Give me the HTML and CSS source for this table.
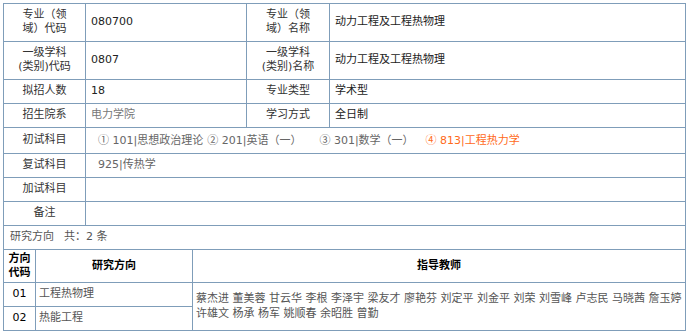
FILE: index.html
```html
<!DOCTYPE html>
<html lang="zh-CN">
<head>
<meta charset="utf-8">
<title>专业信息</title>
<link rel="stylesheet" href="styles.css">
</head>
<body>
<div class="page">
  <table class="info">
    <colgroup>
      <col class="c1"><col class="c2"><col class="c3"><col class="c4">
    </colgroup>
    <tr class="two">
      <th>专业（领<br>域）代码</th>
      <td class="val">080700</td>
      <th>专业（领<br>域）名称</th>
      <td class="val">动力工程及工程热物理</td>
    </tr>
    <tr class="two">
      <th>一级学科<br>(类别)代码</th>
      <td class="val">0807</td>
      <th>一级学科<br>(类别)名称</th>
      <td class="val">动力工程及工程热物理</td>
    </tr>
    <tr>
      <th>拟招人数</th>
      <td class="val">18</td>
      <th>专业类型</th>
      <td class="val">学术型</td>
    </tr>
    <tr>
      <th>招生院系</th>
      <td class="val light">电力学院</td>
      <th>学习方式</th>
      <td class="val">全日制</td>
    </tr>
    <tr>
      <th>初试科目</th>
      <td colspan="3" class="subjects">
        <span class="subj"><span class="num">①</span> 101|思想政治理论</span><span class="subj"><span class="num">②</span> 201|英语（一）</span><span class="subj"><span class="num">③</span> 301|数学（一）</span><span class="subj hot"><span class="num">④</span> 813|工程热力学</span>
      </td>
    </tr>
    <tr>
      <th>复试科目</th>
      <td colspan="3" class="subjects"><span class="subj">925|传热学</span></td>
    </tr>
    <tr>
      <th>加试科目</th>
      <td colspan="3"></td>
    </tr>
    <tr>
      <th>备注</th>
      <td colspan="3"></td>
    </tr>
    <tr>
      <td colspan="4" class="dir-title">研究方向<span class="count">共：2 条</span></td>
    </tr>
  </table>
  <table class="dirs">
    <colgroup>
      <col class="d1"><col class="d2"><col class="d3">
    </colgroup>
    <tr class="head">
      <th>方向<br>代码</th>
      <th>研究方向</th>
      <th>指导教师</th>
    </tr>
    <tr>
      <td class="code">01</td>
      <td class="name">工程热物理</td>
      <td rowspan="2" class="teachers">蔡杰进 董美蓉 甘云华 李根 李泽宇 梁友才 廖艳芬 刘定平 刘金平 刘荣 刘雪峰 卢志民 马晓茜 詹玉婷 许雄文 杨承 杨军 姚顺春 余昭胜 曾勤</td>
    </tr>
    <tr>
      <td class="code">02</td>
      <td class="name">热能工程</td>
    </tr>
  </table>
</div>
</body>
</html>
```

FILE: styles.css
```css
html, body {
  margin: 0;
  padding: 0;
  background: #fff;
}

.page {
  padding: 3px;
  font-family: "DejaVu Sans", "Noto Sans CJK SC", sans-serif;
  font-size: 11px;
  color: #333;
}

table {
  border-collapse: collapse;
  table-layout: fixed;
  width: 683px;
}

th, td {
  border: 1px solid #7f9db9;
  line-height: 14px;
  padding: 4px 5px 5px;
  vertical-align: middle;
}

.info th {
  font-weight: normal;
  text-align: center;
  color: #333;
  padding-left: 2px;
  padding-right: 2px;
}

.c1 { width: 82px; }
.c2 { width: 161px; }
.c3 { width: 83px; }
.c4 { width: 356px; }

.info .val {
  text-align: left;
  color: #222;
}

.info .light {
  color: #777;
}

.subjects {
  padding-left: 12px;
  color: #666;
  white-space: nowrap;
}

.num {
  font-family: "Noto Sans CJK SC", sans-serif;
}

.subj {
  margin-right: 4px;
}

.subj:nth-child(2) {
  margin-right: 18px;
}

.subj:nth-child(3) {
  margin-right: 12px;
}

.subj.hot {
  color: #ff6a1a;
  margin-right: 0;
}

.dir-title {
  padding-left: 6px;
  color: #555;
}

.count {
  margin-left: 10px;
}

.dirs {
  margin-top: -1px;
}

.d1 { width: 32px; }
.d2 { width: 157px; }
.d3 { width: 493px; }

.dirs .head th {
  font-weight: bold;
  color: #000;
  text-align: center;
  padding: 2px 1px;
}

.dirs .code {
  text-align: center;
  color: #000;
  padding: 4px 1px 5px;
}

.dirs .name {
  padding-left: 3px;
  color: #555;
}

.dirs .teachers {
  padding-left: 3px;
  padding-right: 3px;
  line-height: 15px;
  color: #555;
}
```
